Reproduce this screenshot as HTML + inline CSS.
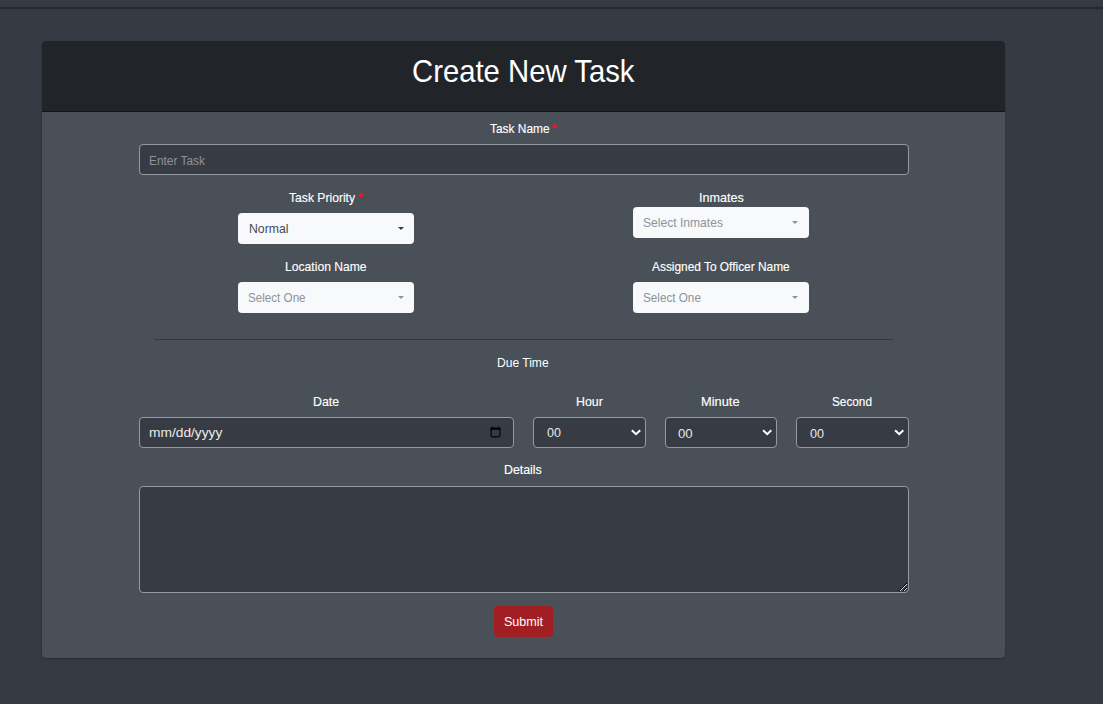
<!DOCTYPE html>
<html>
<head>
<meta charset="utf-8">
<style>
html,body{margin:0;padding:0;}
body{width:1103px;height:704px;overflow:hidden;background:#363a42;position:relative;font-family:"Liberation Sans",sans-serif;}
.topline{position:absolute;left:0;top:7px;width:1103px;height:2px;background:#26292e;box-shadow:0 0 1px rgba(0,0,0,.35);}
.card{position:absolute;left:42px;top:41px;width:963px;height:617px;background:#495057;border-radius:4px;box-shadow:0 1px 2px rgba(0,0,0,.3);overflow:hidden;}
.hdr{position:absolute;left:0;top:0;width:963px;height:70px;background:#212529;border-bottom:1px solid #121416;}
.t{position:absolute;white-space:nowrap;transform-origin:0 0;}
.inp{position:absolute;box-sizing:border-box;background:#373b43;border:1px solid #949aa1;border-radius:4px;}
.sel{position:absolute;box-sizing:border-box;background:#f8f9fb;border-radius:4px;}
.caret{position:absolute;width:0;height:0;border-top:3px solid #343a40;border-left:3px solid transparent;border-right:3px solid transparent;}
.hr{position:absolute;left:154px;top:339px;width:739px;height:1px;background:#32363d;}
.btn{position:absolute;left:494px;top:606px;width:59px;height:31px;background:#a11e23;border-radius:4px;}
svg{position:absolute;overflow:visible;}
</style>
</head>
<body>
<div class="topline"></div>
<div class="card">
  <div class="hdr"></div>
</div>

<div class="inp" style="left:139px;top:144px;width:770px;height:31px;"></div>

<div class="sel" style="left:238px;top:213px;width:176px;height:31px;"></div>
<div class="caret" style="left:398px;top:227px;"></div>
<div class="sel" style="left:633px;top:207px;width:176px;height:31px;"></div>
<div class="caret" style="left:792px;top:221px;border-top-color:#8d939a;"></div>
<div class="sel" style="left:238px;top:282px;width:176px;height:31px;"></div>
<div class="caret" style="left:398px;top:296px;border-top-color:#8d939a;"></div>
<div class="sel" style="left:633px;top:282px;width:176px;height:31px;"></div>
<div class="caret" style="left:792px;top:296px;border-top-color:#8d939a;"></div>

<div class="hr"></div>

<div class="inp" style="left:139px;top:417px;width:375px;height:31px;"></div>
<svg style="left:487px;top:423px" width="17" height="17" viewBox="0 0 17 17">
  <rect x="4.1" y="5.5" width="8.8" height="8.3" rx="1.2" fill="none" stroke="#0b0c0e" stroke-width="1.4"/>
  <rect x="3.4" y="4.6" width="10.2" height="2.3" fill="#050607"/>
  <polygon points="4.5,4.8 5.4,2.9 6.3,4.8" fill="#050607"/>
  <polygon points="10.6,4.8 11.5,2.9 12.4,4.8" fill="#050607"/>
</svg>

<div class="inp" style="left:533px;top:417px;width:113px;height:31px;"></div>
<div class="inp" style="left:665px;top:417px;width:112px;height:31px;"></div>
<div class="inp" style="left:796px;top:417px;width:113px;height:31px;"></div>
<svg style="left:0;top:0" width="1103" height="704">
  <polyline points="631.8,430.2 636,434.2 640.2,430.2" fill="none" stroke="#fff" stroke-width="2"/>
  <polyline points="763.1,430.2 767.2,434.2 771.3,430.2" fill="none" stroke="#fff" stroke-width="2"/>
  <polyline points="895.1,430.2 899.2,434.2 903.3,430.2" fill="none" stroke="#fff" stroke-width="2"/>
</svg>

<div class="inp" style="left:139px;top:486px;width:770px;height:107px;"></div>
<svg style="left:0;top:0" width="1103" height="704" shape-rendering="crispEdges">
<rect x="900" y="589" width="1" height="1" fill="#000"/>
<rect x="900" y="590" width="1" height="1" fill="#d8d8d8"/>
<rect x="901" y="588" width="1" height="1" fill="#000"/>
<rect x="901" y="589" width="1" height="1" fill="#d8d8d8"/>
<rect x="902" y="587" width="1" height="1" fill="#000"/>
<rect x="902" y="588" width="1" height="1" fill="#d8d8d8"/>
<rect x="903" y="586" width="1" height="1" fill="#000"/>
<rect x="903" y="587" width="1" height="1" fill="#d8d8d8"/>
<rect x="904" y="585" width="1" height="1" fill="#000"/>
<rect x="904" y="586" width="1" height="1" fill="#d8d8d8"/>
<rect x="905" y="584" width="1" height="1" fill="#000"/>
<rect x="905" y="585" width="1" height="1" fill="#d8d8d8"/>
<rect x="906" y="583" width="1" height="1" fill="#000"/>
<rect x="906" y="584" width="1" height="1" fill="#d8d8d8"/>
<rect x="899" y="590" width="1" height="1" fill="#000"/>
<rect x="904" y="589" width="1" height="1" fill="#000"/>
<rect x="904" y="590" width="1" height="1" fill="#d8d8d8"/>
<rect x="905" y="588" width="1" height="1" fill="#000"/>
<rect x="905" y="589" width="1" height="1" fill="#d8d8d8"/>
<rect x="906" y="587" width="1" height="1" fill="#000"/>
<rect x="906" y="588" width="1" height="1" fill="#d8d8d8"/>
<rect x="903" y="590" width="1" height="1" fill="#000"/>
</svg>

<div class="btn"></div>

<svg style="left:0;top:0" width="1103" height="704">
  <g stroke="#f3142c" stroke-width="1.25" stroke-linecap="round">
    <line x1="552.60" y1="126.00" x2="556.80" y2="126.00"/>
    <line x1="553.65" y1="124.18" x2="555.75" y2="127.82"/>
    <line x1="555.75" y1="124.18" x2="553.65" y2="127.82"/>
    <line x1="359.05" y1="195.20" x2="363.25" y2="195.20"/>
    <line x1="360.10" y1="193.38" x2="362.20" y2="197.02"/>
    <line x1="362.20" y1="193.38" x2="360.10" y2="197.02"/>
  </g>
</svg>

<div class="t" style="left:412.18px;top:54.70px;font-size:32px;line-height:32px;font-weight:400;color:#fff;transform:scaleX(0.9153);">Create New Task</div>
<div class="t" style="left:489.80px;top:121.80px;font-size:13.3px;line-height:13.3px;font-weight:400;color:#fff;transform:scaleX(0.8955);-webkit-text-stroke:0.15px #fff;">Task Name</div>
<div class="t" style="left:148.50px;top:153.90px;font-size:13.3px;line-height:13.3px;font-weight:400;color:#8d939a;transform:scaleX(0.8952);">Enter Task</div>
<div class="t" style="left:288.80px;top:190.90px;font-size:13.3px;line-height:13.3px;font-weight:400;color:#fff;transform:scaleX(0.9123);-webkit-text-stroke:0.15px #fff;">Task Priority</div>
<div class="t" style="left:248.58px;top:221.80px;font-size:13.3px;line-height:13.3px;font-weight:400;color:#464a51;transform:scaleX(0.9214);">Normal</div>
<div class="t" style="left:698.55px;top:191.00px;font-size:13.3px;line-height:13.3px;font-weight:400;color:#fff;transform:scaleX(0.9457);-webkit-text-stroke:0.15px #fff;">Inmates</div>
<div class="t" style="left:642.89px;top:215.80px;font-size:13.3px;line-height:13.3px;font-weight:400;color:#8d939a;transform:scaleX(0.9092);">Select Inmates</div>
<div class="t" style="left:285.39px;top:260.10px;font-size:13.3px;line-height:13.3px;font-weight:400;color:#fff;transform:scaleX(0.9125);-webkit-text-stroke:0.15px #fff;">Location Name</div>
<div class="t" style="left:652.10px;top:260.00px;font-size:13.3px;line-height:13.3px;font-weight:400;color:#fff;transform:scaleX(0.8942);-webkit-text-stroke:0.15px #fff;">Assigned To Officer Name</div>
<div class="t" style="left:248.22px;top:290.80px;font-size:13.3px;line-height:13.3px;font-weight:400;color:#8d939a;transform:scaleX(0.8754);">Select One</div>
<div class="t" style="left:642.72px;top:290.80px;font-size:13.3px;line-height:13.3px;font-weight:400;color:#8d939a;transform:scaleX(0.8800);">Select One</div>
<div class="t" style="left:497.29px;top:356.00px;font-size:13.3px;line-height:13.3px;font-weight:400;color:#fff;transform:scaleX(0.9071);">Due Time</div>
<div class="t" style="left:313.07px;top:395.00px;font-size:13.3px;line-height:13.3px;font-weight:400;color:#fff;transform:scaleX(0.9296);-webkit-text-stroke:0.15px #fff;">Date</div>
<div class="t" style="left:149.17px;top:426.10px;font-size:13.3px;line-height:13.3px;font-weight:400;color:#ebebeb;transform:scaleX(1.0343);">mm/dd/yyyy</div>
<div class="t" style="left:575.67px;top:395.10px;font-size:13.3px;line-height:13.3px;font-weight:400;color:#fff;transform:scaleX(0.9321);-webkit-text-stroke:0.15px #fff;">Hour</div>
<div class="t" style="left:701.33px;top:395.10px;font-size:13.3px;line-height:13.3px;font-weight:400;color:#fff;transform:scaleX(0.9667);-webkit-text-stroke:0.15px #fff;">Minute</div>
<div class="t" style="left:832.11px;top:395.10px;font-size:13.3px;line-height:13.3px;font-weight:400;color:#fff;transform:scaleX(0.8864);-webkit-text-stroke:0.15px #fff;">Second</div>
<div class="t" style="left:546.90px;top:426.30px;font-size:13.3px;line-height:13.3px;font-weight:400;color:#e6e8ea;transform:scaleX(0.9400);">00</div>
<div class="t" style="left:678.20px;top:426.60px;font-size:13.3px;line-height:13.3px;font-weight:400;color:#e6e8ea;transform:scaleX(0.9933);">00</div>
<div class="t" style="left:810.00px;top:426.60px;font-size:13.3px;line-height:13.3px;font-weight:400;color:#e6e8ea;transform:scaleX(0.9467);">00</div>
<div class="t" style="left:504.37px;top:462.90px;font-size:13.3px;line-height:13.3px;font-weight:400;color:#fff;transform:scaleX(0.9275);-webkit-text-stroke:0.15px #fff;">Details</div>
<div class="t" style="left:503.56px;top:614.90px;font-size:13.3px;line-height:13.3px;font-weight:400;color:#fff;transform:scaleX(0.9439);">Submit</div>
</body>
</html>
